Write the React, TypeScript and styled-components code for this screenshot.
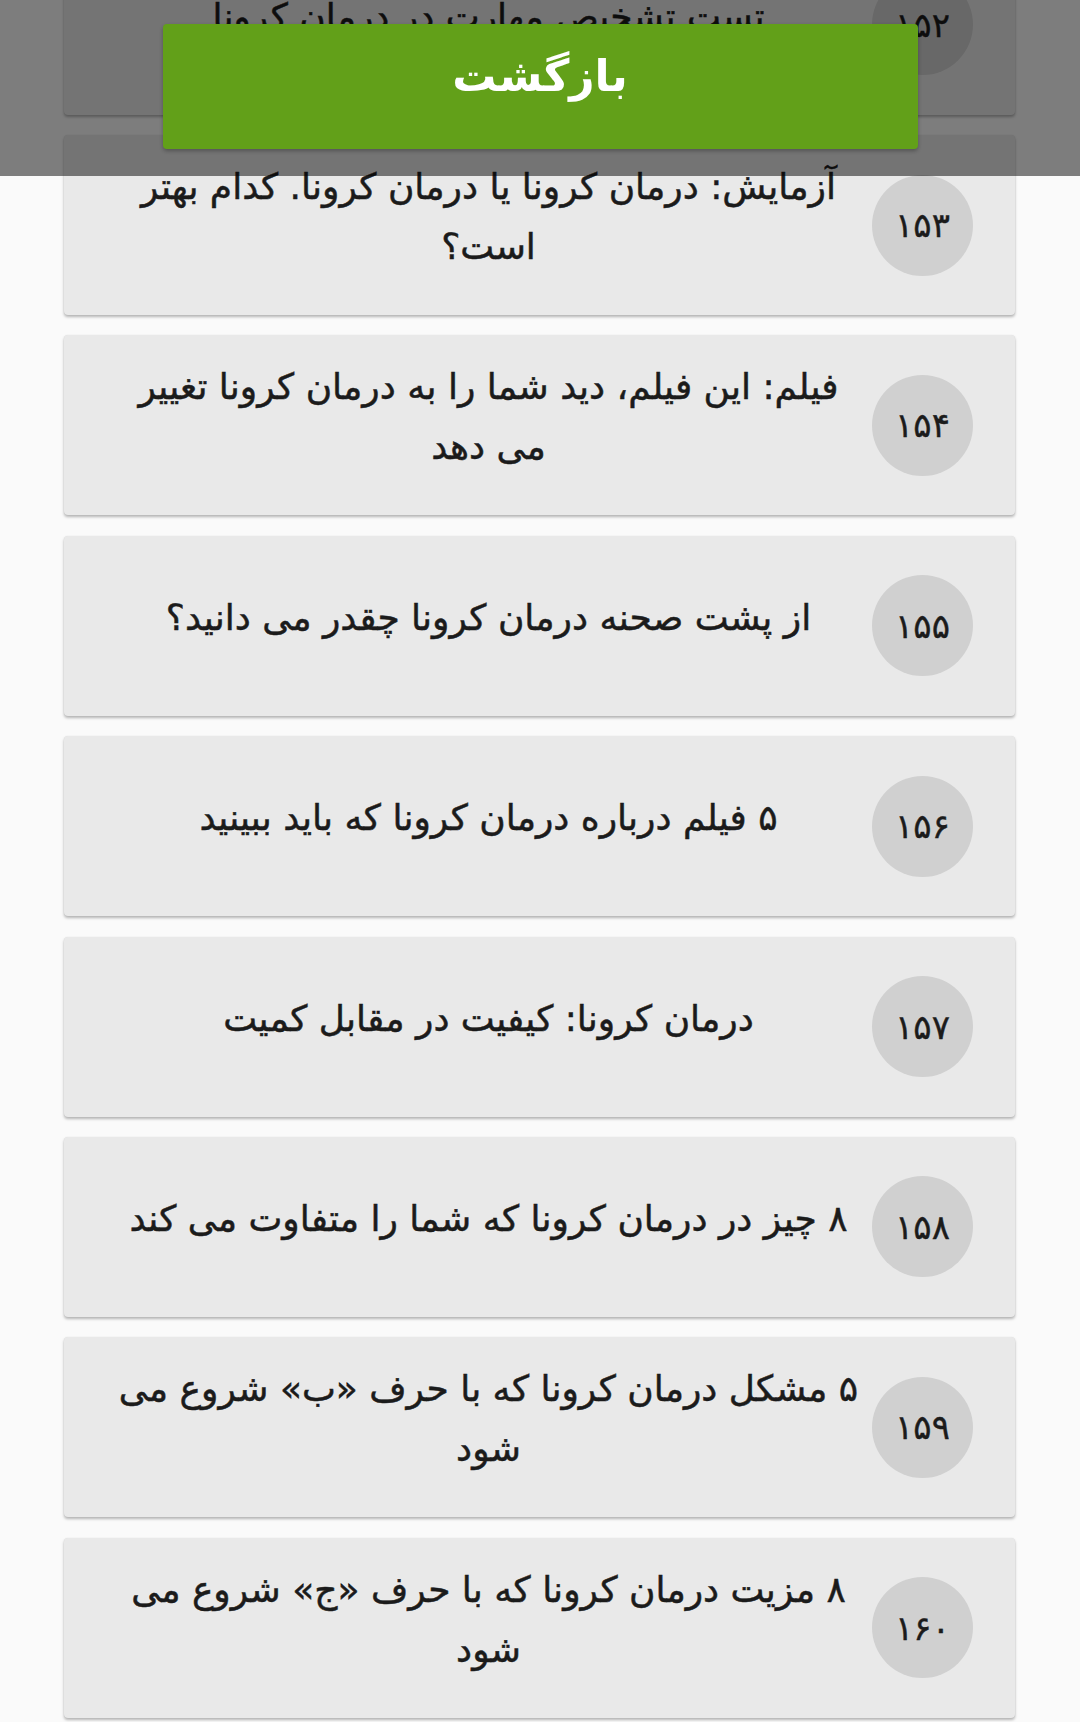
import React from 'react'
import styled, { createGlobalStyle } from 'styled-components'

const GlobalStyle = createGlobalStyle`
    html, body {
        margin: 0;
        padding: 0;
        background-color: #fafafa;
        font-family: "DejaVu Sans", "Noto Sans", sans-serif;
    }
`

const Page = styled.div`
    direction: rtl;
    min-height: 1722px;
    overflow: hidden;
`

// the list is scrolled near its end, so the first card sits partly above the top
const List = styled.div`
    display: flex;
    flex-direction: column;
    gap: 20.4px;
    padding: 0 65px 0 64px;
    margin-top: -65.4px;
`

const Card = styled.div`
    display: flex;
    align-items: center;
    box-sizing: border-box;
    height: 180px;
    padding: 0 42px 0 54px;
    background-color: #e9e9e9;
    border-radius: 4px;
    box-shadow: 0 2px 3px rgba(0, 0, 0, 0.28), 0 0 1px rgba(0, 0, 0, 0.12);
`

const Badge = styled.div`
    flex: 0 0 101px;
    height: 101px;
    border-radius: 50%;
    background-color: #d0d0d0;
    display: flex;
    align-items: center;
    justify-content: center;
    font-size: 34px;
    color: #1b1b1b;
    -webkit-text-stroke: 0.4px #1b1b1b;
`

const Title = styled.div`
    flex: 1;
    margin-right: 13px;
    padding-bottom: 16px;
    text-align: center;
    font-size: 36px;
    line-height: 60px;
    color: #1b1b1b;
    -webkit-text-stroke: 0.5px #1b1b1b;
`

const TopBar = styled.div`
    position: fixed;
    top: 0;
    left: 0;
    right: 0;
    height: 176px;
    background-color: rgba(0, 0, 0, 0.5);
    display: flex;
    justify-content: center;
    padding-top: 24px;
    box-sizing: border-box;
`

const BackButton = styled.button`
    width: 755px;
    height: 125px;
    padding: 0 0 22px;
    border: none;
    border-radius: 4px;
    background-color: #62a019;
    color: #ffffff;
    font-family: "DejaVu Sans", sans-serif;
    font-size: 44px;
    font-weight: bold;
    box-shadow: 0 2px 4px rgba(0, 0, 0, 0.3);
    direction: rtl;
`

const toPersian = (n: number) => String(n).replace(/\d/g, d => '۰۱۲۳۴۵۶۷۸۹'[Number(d)])

const items = [
    { n: 152, title: 'تست تشخیص مهارت در درمان کرونا' },
    { n: 153, title: 'آزمایش: درمان کرونا یا درمان کرونا. کدام بهتر است؟' },
    { n: 154, title: 'فیلم: این فیلم، دید شما را به درمان کرونا تغییر می دهد' },
    { n: 155, title: 'از پشت صحنه درمان کرونا چقدر می دانید؟' },
    { n: 156, title: '۵ فیلم درباره درمان کرونا که باید ببینید' },
    { n: 157, title: 'درمان کرونا: کیفیت در مقابل کمیت' },
    { n: 158, title: '۸ چیز در درمان کرونا که شما را متفاوت می کند' },
    { n: 159, title: '۵ مشکل درمان کرونا که با حرف «ب» شروع می شود' },
    { n: 160, title: '۸ مزیت درمان کرونا که با حرف «ج» شروع می شود' },
]

const App: React.FC = () => {
    return (
        <Page>
            <GlobalStyle />
            <List>
                {items.map(item => (
                    <Card key={item.n}>
                        <Badge>{toPersian(item.n)}</Badge>
                        <Title>{item.title}</Title>
                    </Card>
                ))}
            </List>
            <TopBar>
                <BackButton>بازگشت</BackButton>
            </TopBar>
        </Page>
    )
}

export default App
